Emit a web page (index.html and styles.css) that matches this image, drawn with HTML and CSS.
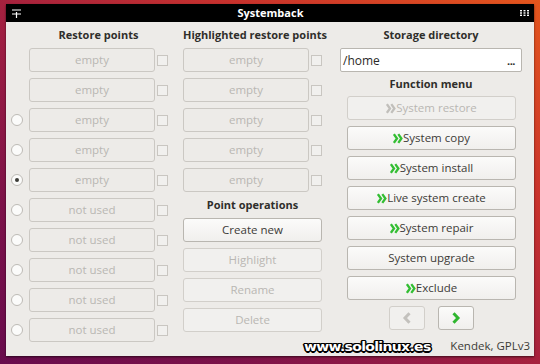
FILE: index.html
```html
<!DOCTYPE html>
<html>
<head>
<meta charset="utf-8">
<link rel="stylesheet" href="styles.css">
</head>
<body>
<div class="window">
  <div class="titlebar">
    <svg class="ticon" width="9" height="9" viewBox="0 0 9 9"><path d="M0 1H9M0 5H9M4.5 3V9" stroke="#fff" stroke-width="1.2"/></svg>
    <span class="title">Systemback</span>
    <svg class="ticon" width="9" height="6" viewBox="0 0 9 6"><g fill="#fff"><rect x="0" y="0" width="2" height="1.4"/><rect x="3.5" y="0" width="2" height="1.4"/><rect x="7" y="0" width="2" height="1.4"/><rect x="0" y="2.3" width="2" height="1.4"/><rect x="3.5" y="2.3" width="2" height="1.4"/><rect x="7" y="2.3" width="2" height="1.4"/><rect x="0" y="4.6" width="2" height="1.4"/><rect x="3.5" y="4.6" width="2" height="1.4"/><rect x="7" y="4.6" width="2" height="1.4"/></g></svg>
  </div>
  <div class="content">
    <div class="col col1">
      <div class="heading h1">Restore points</div>
      <div class="row"><span class="rslot"></span><div class="slot">empty</div><span class="check"></span></div>
      <div class="row"><span class="rslot"></span><div class="slot">empty</div><span class="check"></span></div>
      <div class="row"><span class="rslot"><span class="radio"></span></span><div class="slot">empty</div><span class="check"></span></div>
      <div class="row"><span class="rslot"><span class="radio"></span></span><div class="slot">empty</div><span class="check"></span></div>
      <div class="row"><span class="rslot"><span class="radio on"></span></span><div class="slot">empty</div><span class="check"></span></div>
      <div class="row"><span class="rslot"><span class="radio"></span></span><div class="slot">not used</div><span class="check"></span></div>
      <div class="row"><span class="rslot"><span class="radio"></span></span><div class="slot">not used</div><span class="check"></span></div>
      <div class="row"><span class="rslot"><span class="radio"></span></span><div class="slot">not used</div><span class="check"></span></div>
      <div class="row"><span class="rslot"><span class="radio"></span></span><div class="slot">not used</div><span class="check"></span></div>
      <div class="row"><span class="rslot"><span class="radio"></span></span><div class="slot">not used</div><span class="check"></span></div>
    </div>
    <div class="col col2">
      <div class="heading">Highlighted restore points</div>
      <div class="row"><div class="slot">empty</div><span class="check"></span></div>
      <div class="row"><div class="slot">empty</div><span class="check"></span></div>
      <div class="row"><div class="slot">empty</div><span class="check"></span></div>
      <div class="row"><div class="slot">empty</div><span class="check"></span></div>
      <div class="row"><div class="slot">empty</div><span class="check"></span></div>
      <div class="heading">Point operations</div>
      <div class="btn">Create new</div>
      <div class="btn disabled">Highlight</div>
      <div class="btn disabled">Rename</div>
      <div class="btn disabled">Delete</div>
    </div>
    <div class="col col3">
      <div class="heading">Storage directory</div>
      <div class="dir"><span>/home</span><span class="dots">...</span></div>
      <div class="heading fm">Function menu</div>
      <div class="menu">
        <div class="btn disabled"><svg class="chev" width="10" height="11" viewBox="0 0 10 11"><path d="M0.9 1.2L4 5.5L0.9 9.8M5.3 1.2L8.4 5.5L5.3 9.8" fill="none" stroke="currentColor" stroke-width="2.3"/></svg>System restore</div>
        <div class="btn"><svg class="chev green" width="10" height="11" viewBox="0 0 10 11"><path d="M0.9 1.2L4 5.5L0.9 9.8M5.3 1.2L8.4 5.5L5.3 9.8" fill="none" stroke="currentColor" stroke-width="2.3"/></svg>System copy</div>
        <div class="btn"><svg class="chev green" width="10" height="11" viewBox="0 0 10 11"><path d="M0.9 1.2L4 5.5L0.9 9.8M5.3 1.2L8.4 5.5L5.3 9.8" fill="none" stroke="currentColor" stroke-width="2.3"/></svg>System install</div>
        <div class="btn"><svg class="chev green" width="10" height="11" viewBox="0 0 10 11"><path d="M0.9 1.2L4 5.5L0.9 9.8M5.3 1.2L8.4 5.5L5.3 9.8" fill="none" stroke="currentColor" stroke-width="2.3"/></svg>Live system create</div>
        <div class="btn"><svg class="chev green" width="10" height="11" viewBox="0 0 10 11"><path d="M0.9 1.2L4 5.5L0.9 9.8M5.3 1.2L8.4 5.5L5.3 9.8" fill="none" stroke="currentColor" stroke-width="2.3"/></svg>System repair</div>
        <div class="btn">System upgrade</div>
        <div class="btn"><svg class="chev green" width="10" height="11" viewBox="0 0 10 11"><path d="M0.9 1.2L4 5.5L0.9 9.8M5.3 1.2L8.4 5.5L5.3 9.8" fill="none" stroke="currentColor" stroke-width="2.3"/></svg>Exclude</div>
      </div>
      <div class="nav">
        <div class="btn navbtn disabled"><svg width="10" height="12" viewBox="0 0 10 12"><path d="M7.5 1.2L3 6L7.5 10.8" fill="none" stroke="#c3c1bd" stroke-width="3"/></svg></div>
        <div class="btn navbtn"><svg width="10" height="12" viewBox="0 0 10 12"><path d="M2.5 1.2L7 6L2.5 10.8" fill="none" stroke="#2fb62f" stroke-width="3"/></svg></div>
      </div>
      <div class="credits">Kendek, GPLv3</div>
    </div>
  </div>
  <div class="watermark">www.sololinux.es</div>
</div>
</body>
</html>
```
FILE: styles.css
```css
html, body {
  margin: 0;
  padding: 0;
}
body {
  width: 540px;
  height: 364px;
  overflow: hidden;
  background: linear-gradient(to bottom left, #e4561d 0%, #c8322c 28%, #9e1e42 55%, #7c1249 78%, #680b4d 100%);
  font-family: "Open Sans", "DejaVu Sans", sans-serif;
  color: #3c3b37;
}
.window {
  margin: 4px 0 0 6px;
  width: 528px;
  height: 352px;
  background: #edebe8;
  position: relative;
  display: flex;
  flex-direction: column;
  box-shadow: 0 1px 2px rgba(0, 0, 0, 0.6);
}
.titlebar {
  height: 18px;
  background: #000;
  color: #fff;
  display: flex;
  align-items: center;
  justify-content: space-between;
  padding: 0 5px 0 6px;
  flex: none;
}
.title {
  font-weight: bold;
  font-size: 11px;
  line-height: 18px;
}
.ticon {
  display: block;
}
.content {
  display: flex;
  flex: 1;
  padding-top: 6px;
}
.col {
  display: flex;
  flex-direction: column;
}
.col1 {
  width: 162px;
  margin-right: 15px;
}
.col2 {
  width: 139px;
  margin-right: 18px;
}
.col3 {
  width: 182px;
}
.heading {
  font-weight: bold;
  font-size: 11px;
  line-height: 14px;
  height: 14px;
  text-align: center;
  margin-bottom: 6px;
  white-space: nowrap;
  color: #2f2e2b;
}
.h1 {
  padding-left: 23px;
}
.row {
  display: flex;
  align-items: center;
  height: 24px;
  margin-bottom: 6px;
}
.rslot {
  width: 23px;
  flex: none;
  display: flex;
  align-items: center;
  padding-left: 5px;
  box-sizing: border-box;
}
.radio {
  width: 12px;
  height: 12px;
  box-sizing: border-box;
  border: 1px solid #bdbab5;
  border-radius: 50%;
  background: #fbfbfa;
  display: flex;
  align-items: center;
  justify-content: center;
}
.radio.on::after {
  content: "";
  width: 4px;
  height: 4px;
  border-radius: 50%;
  background: #3c3b37;
}
.slot {
  width: 126px;
  height: 24px;
  box-sizing: border-box;
  border: 1px solid #cbc8c3;
  border-radius: 3px;
  font-size: 11.5px;
  line-height: 22px;
  text-align: center;
  color: #b9b7b3;
  flex: none;
}
.check {
  width: 11px;
  height: 11px;
  margin-left: 2px;
  box-sizing: border-box;
  border: 1px solid #c9c6c1;
  background: #f1f0ee;
  flex: none;
}
.btn {
  height: 24px;
  box-sizing: border-box;
  border: 1px solid #b9b6b0;
  border-radius: 3px;
  background: linear-gradient(#fbfbfa, #f0efed);
  font-size: 11.5px;
  line-height: 22px;
  text-align: center;
  color: #3c3b37;
  margin-bottom: 6px;
  display: flex;
  align-items: center;
  justify-content: center;
  white-space: nowrap;
}
.btn.disabled {
  border-color: #d2cfca;
  background: #f1f0ee;
  color: #b9b7b3;
}
.chev {
  color: #c1bfbb;
  margin-right: 0;
  flex: none;
}
.chev.green {
  color: #33be33;
}
.dir {
  height: 24px;
  box-sizing: border-box;
  border: 1px solid #b9b6b0;
  border-radius: 2px;
  background: #fff;
  display: flex;
  align-items: center;
  justify-content: space-between;
  padding: 0 6px 0 2px;
  font-size: 12px;
  color: #2b2a27;
}
.dots {
  font-weight: bold;
  font-size: 11px;
  letter-spacing: -0.5px;
}
.fm {
  margin-top: 5px;
  margin-bottom: 5px;
}
.menu {
  display: flex;
  flex-direction: column;
  padding-left: 7px;
  width: 169px;
}
.nav {
  display: flex;
  justify-content: center;
  gap: 13px;
  padding-left: 1px;
}
.navbtn {
  width: 36px;
}
.credits {
  margin-top: auto;
  margin-right: -8px;
  margin-bottom: 2px;
  text-align: right;
  font-size: 11.5px;
  line-height: 16px;
  color: #3c3b37;
  white-space: nowrap;
}
.watermark {
  position: absolute;
  left: 298px;
  top: 336px;
  font-family: "DejaVu Sans", sans-serif;
  font-weight: bold;
  font-size: 12.5px;
  line-height: 13px;
  letter-spacing: -0.6px;
  color: #fff;
  text-shadow: -1px -1px 0 #000, 1px -1px 0 #000, -1px 1px 0 #000, 1px 1px 0 #000, 0 -1.5px 0 #000, 0 1.5px 0 #000, -1.5px 0 0 #000, 1.5px 0 0 #000;
  transform: scaleX(1.12);
  transform-origin: left center;
}
```
